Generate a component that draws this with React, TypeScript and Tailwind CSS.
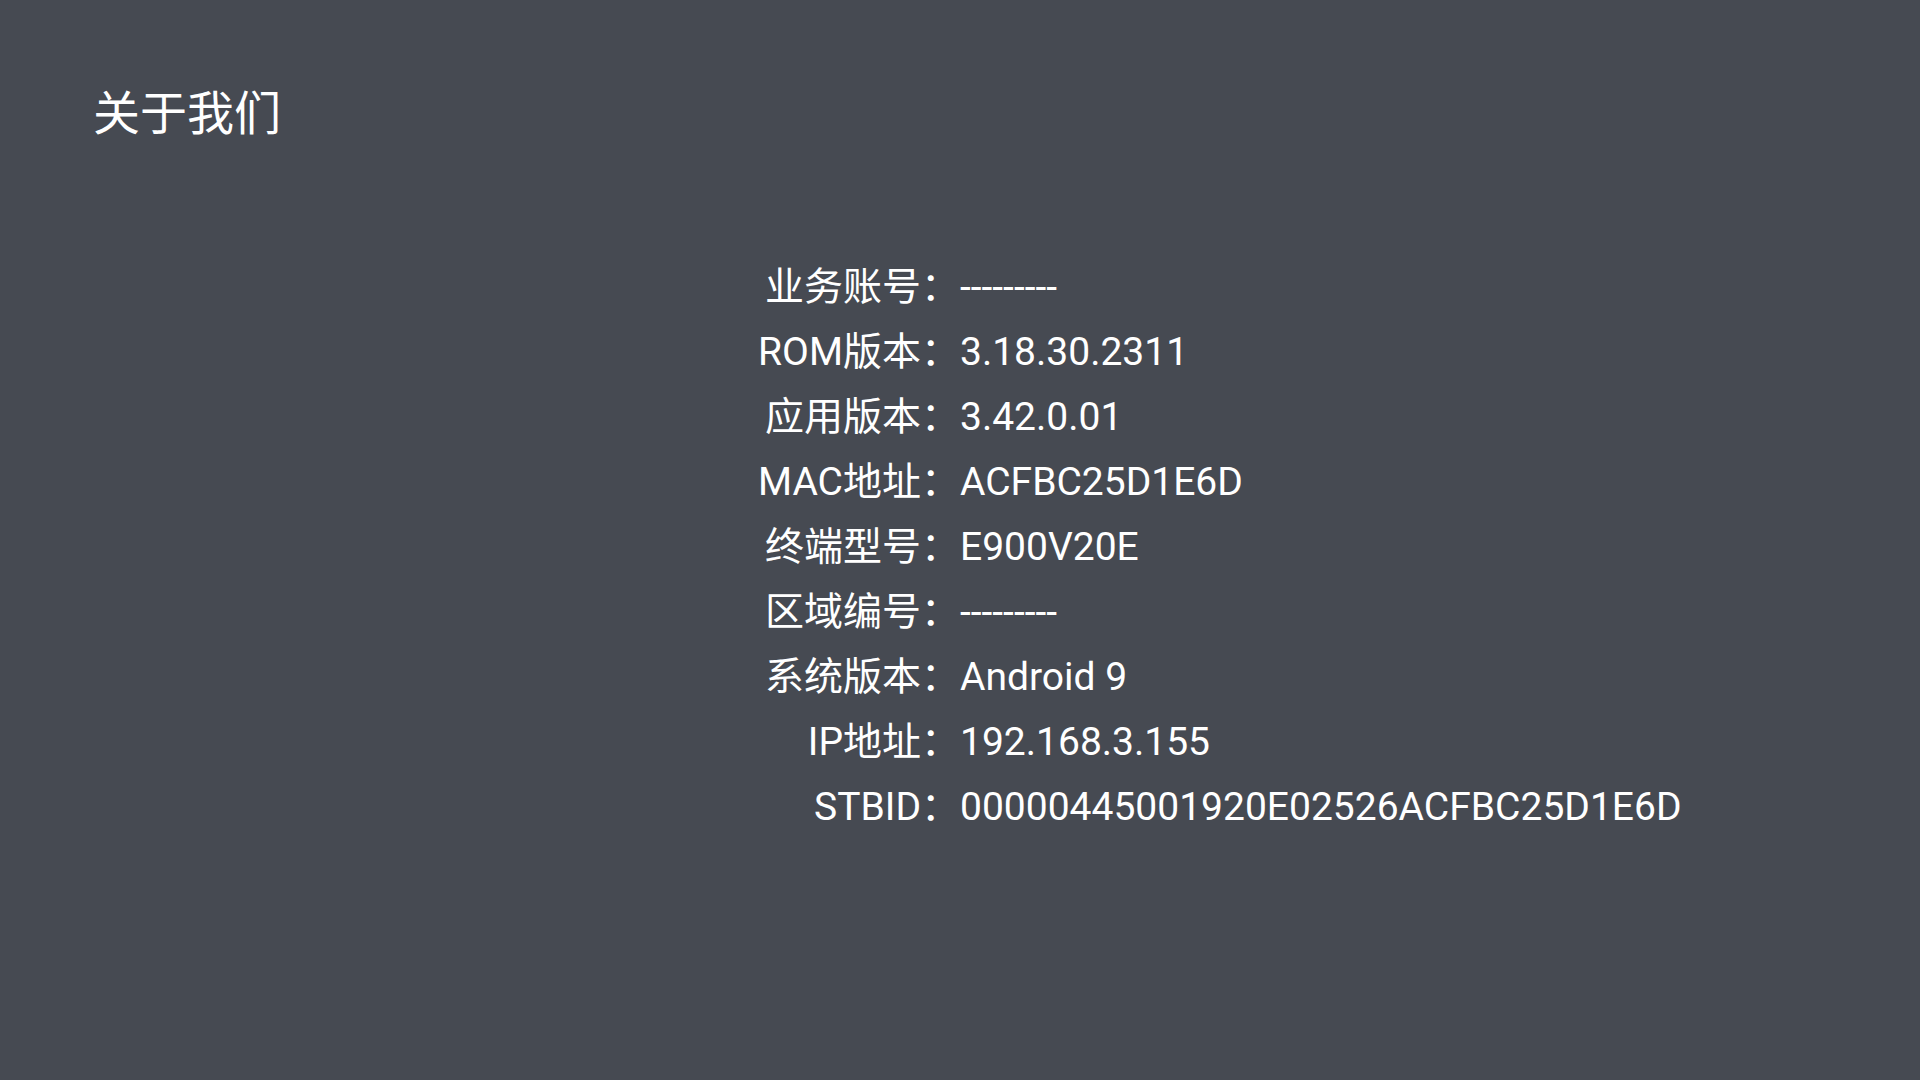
const ROWS: [string, string][] = [
  ['业务账号：', '---------'],
  ['ROM版本：', '3.18.30.2311'],
  ['应用版本：', '3.42.0.01'],
  ['MAC地址：', 'ACFBC25D1E6D'],
  ['终端型号：', 'E900V20E'],
  ['区域编号：', '---------'],
  ['系统版本：', 'Android 9'],
  ['IP地址：', '192.168.3.155'],
  ['STBID：', '00000445001920E02526ACFBC25D1E6D'],
];

export default function App() {
  return (
    <div
      className="h-[1080px] w-[1920px] overflow-hidden bg-[#464a52] text-white"
      style={{ fontFamily: 'Roboto, "Noto Sans CJK SC", sans-serif' }}
    >
      <h1 className="pl-[93px] pt-[87px] text-[47px] leading-[54px] font-normal">关于我们</h1>

      <div className="mt-[114px] flex flex-col">
        {ROWS.map(([label, value]) => (
          <div key={label} className="flex h-[65px] items-center text-[39px]">
            <span className="w-1/2 text-right">{label}</span>
            <span className="w-1/2">{value}</span>
          </div>
        ))}
      </div>
    </div>
  );
}
